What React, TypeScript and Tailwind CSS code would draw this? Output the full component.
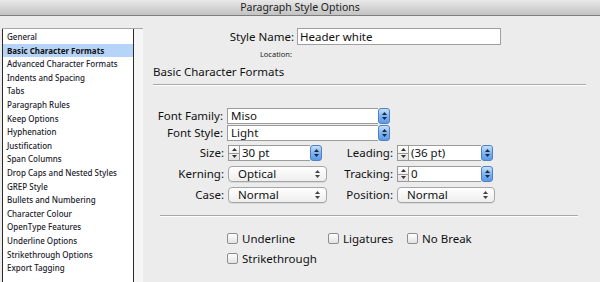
import React from "react";

const font = { fontFamily: '"Noto Sans", "DejaVu Sans", sans-serif' };

const items = [
  "General",
  "Basic Character Formats",
  "Advanced Character Formats",
  "Indents and Spacing",
  "Tabs",
  "Paragraph Rules",
  "Keep Options",
  "Hyphenation",
  "Justification",
  "Span Columns",
  "Drop Caps and Nested Styles",
  "GREP Style",
  "Bullets and Numbering",
  "Character Colour",
  "OpenType Features",
  "Underline Options",
  "Strikethrough Options",
  "Export Tagging",
];

function BlueArrows() {
  return (
    <div className="w-[12px] h-[16px] shrink-0 rounded-[3px] border border-[#4f7fc4] bg-gradient-to-b from-[#c6e0fb] via-[#7fb4ef] to-[#5b9ce8] flex flex-col items-center justify-center gap-[2px]">
      <svg width="5" height="3" viewBox="0 0 5 3"><path d="M2.5 0L5 3H0z" fill="#1a2a44" /></svg>
      <svg width="5" height="3" viewBox="0 0 5 3"><path d="M0 0h5L2.5 3z" fill="#1a2a44" /></svg>
    </div>
  );
}

function Stepper() {
  return (
    <div className="w-[12px] h-[16px] shrink-0 border border-[#9a9a9a] bg-gradient-to-b from-white to-[#e4e4e4] flex flex-col">
      <div className="flex-1 flex items-center justify-center border-b border-[#9a9a9a]">
        <svg width="5" height="3" viewBox="0 0 5 3"><path d="M2.5 0L5 3H0z" fill="#333" /></svg>
      </div>
      <div className="flex-1 flex items-center justify-center">
        <svg width="5" height="3" viewBox="0 0 5 3"><path d="M0 0h5L2.5 3z" fill="#333" /></svg>
      </div>
    </div>
  );
}

function SelectField({ value, width }: { value: string; width: string }) {
  return (
    <div className={`${width} h-[16px] flex items-stretch`}>
      <div className="flex-1 bg-white border border-[#9c9c9c] border-r-0 text-[11.5px] leading-[14px] pl-[3px] text-[#111]">
        {value}
      </div>
      <BlueArrows />
    </div>
  );
}

function SpinField({ value, width }: { value: string; width: string }) {
  return (
    <div className={`${width} h-[16px] flex items-stretch`}>
      <Stepper />
      <div className="flex-1 bg-white border-y border-[#9c9c9c] text-[11.5px] leading-[14px] pl-[2px] text-[#111]">
        {value}
      </div>
      <BlueArrows />
    </div>
  );
}

function Popup({ value, width }: { value: string; width: string }) {
  return (
    <div
      className={`${width} h-[16px] rounded-[4px] border border-[#a6a6a6] bg-gradient-to-b from-white to-[#eeeeee] flex items-center justify-between pl-[9px] pr-[6px] shadow-[0_1px_0_rgba(0,0,0,0.08)]`}
    >
      <span className="text-[11.5px] leading-[14px] text-[#111]">{value}</span>
      <svg width="5" height="8" viewBox="0 0 5 8">
        <path d="M2.5 0L5 3H0z" fill="#444" />
        <path d="M0 5h5L2.5 8z" fill="#444" />
      </svg>
    </div>
  );
}

function Check({ label, width }: { label: string; width: string }) {
  return (
    <div className={`${width} flex items-center gap-[4px]`}>
      <div className="w-[11px] h-[11px] rounded-[2px] border border-[#8e8e8e] bg-gradient-to-b from-white to-[#e2e2e2]" />
      <span className="text-[11.5px] leading-[13px] text-[#111]">{label}</span>
    </div>
  );
}

function Label({ text, width }: { text: string; width: string }) {
  return <div className={`${width} text-right text-[11.5px] leading-[16px] text-[#111] pr-[4px]`}>{text}</div>;
}

export default function App() {
  return (
    <div className="w-[600px] h-[282px] overflow-hidden bg-[#ececec] flex flex-col" style={font}>
      <div className="h-[16px] shrink-0 bg-gradient-to-b from-[#e9e9e9] to-[#c2c2c2] border-b border-[#7d7d7d] flex justify-center">
        <span className="text-[10.5px] leading-[15px] text-[#222]">Paragraph Style Options</span>
      </div>
      <div className="flex-1 flex min-h-0">
        <div className="ml-[2px] mt-[12px] w-[141px] shrink-0 flex border-t border-[#a8a8a8]">
          <div className="w-[132px] border-x border-[#2a2a2a] bg-white pt-[1px]">
            {items.map((it, i) => (
              <div
                key={it}
                className={`h-[13.6px] pl-[4px] text-[8px] leading-[13.6px] whitespace-nowrap ${
                  i === 1 ? "bg-[#b6d4f7] font-bold text-[#111]" : "font-medium text-[#1b1b2a]"
                }`}
              >
                {it}
              </div>
            ))}
          </div>
          <div className="flex-1 bg-[#f5f5f5]" />
        </div>
        <div className="flex-1 flex flex-col">
          <div className="mt-[12px] flex items-center h-[17px]">
            <div className="w-[154px] text-right pr-[3px] text-[11.5px] text-[#111]">Style Name:</div>
            <div className="w-[204px] h-[17px] bg-white border border-[#a0a0a0] text-[11.5px] leading-[15px] pl-[2px] text-[#111]">
              Header white
            </div>
          </div>
          <div className="mt-[5px] w-[149px] text-right text-[7.5px] leading-[9px] text-[#222]">Location:</div>
          <div className="mt-[5px] ml-[10px] text-[11.5px] leading-[15px] text-[#111]">Basic Character Formats</div>
          <div className="mt-[5px] ml-[10px] mr-[14px] h-[2px] border-t border-[#a9a9a9] border-b border-b-white" />
          <div className="mt-[22px] flex items-center">
            <Label text="Font Family:" width="w-[84px]" />
            <SelectField value="Miso" width="w-[163px]" />
          </div>
          <div className="mt-[1px] flex items-center">
            <Label text="Font Style:" width="w-[84px]" />
            <SelectField value="Light" width="w-[163px]" />
          </div>
          <div className="mt-[4px] flex items-center">
            <Label text="Size:" width="w-[85px]" />
            <SpinField value="30 pt" width="w-[94px]" />
            <Label text="Leading:" width="w-[75px]" />
            <SpinField value="(36 pt)" width="w-[96px]" />
          </div>
          <div className="mt-[5px] flex items-center">
            <Label text="Kerning:" width="w-[85px]" />
            <Popup value="Optical" width="w-[99px]" />
            <Label text="Tracking:" width="w-[70px]" />
            <SpinField value="0" width="w-[96px]" />
          </div>
          <div className="mt-[5px] flex items-center">
            <Label text="Case:" width="w-[85px]" />
            <Popup value="Normal" width="w-[99px]" />
            <Label text="Position:" width="w-[70px]" />
            <Popup value="Normal" width="w-[98px]" />
          </div>
          <div className="mt-[12px] ml-[17px] mr-[22px] h-[2px] border-t border-[#a9a9a9] border-b border-b-white" />
          <div className="mt-[15px] ml-[84px] flex items-center">
            <Check label="Underline" width="w-[101px]" />
            <Check label="Ligatures" width="w-[79px]" />
            <Check label="No Break" width="w-[90px]" />
          </div>
          <div className="mt-[7px] ml-[84px] flex items-center">
            <Check label="Strikethrough" width="w-[120px]" />
          </div>
        </div>
      </div>
    </div>
  );
}
